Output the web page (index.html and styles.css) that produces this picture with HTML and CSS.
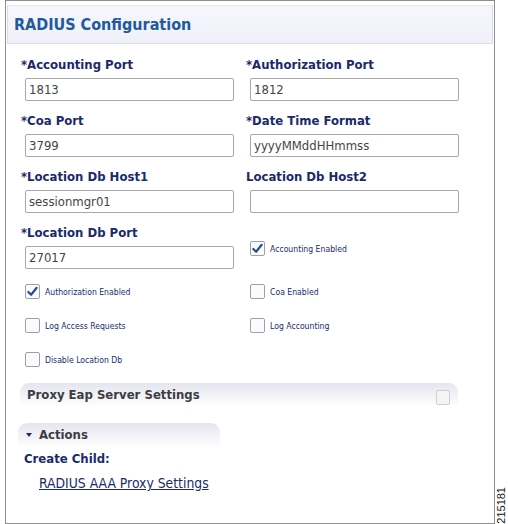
FILE: index.html
```html
<!DOCTYPE html>
<html>
<head>
<meta charset="utf-8">
<link rel="stylesheet" href="styles.css">
</head>
<body>
<div class="page">
  <div class="frame">
    <div class="header"><h1 class="title">RADIUS Configuration</h1></div>
    <div class="fields">
      <div class="field">
        <label class="label">*Accounting Port</label>
        <div class="input">1813</div>
      </div>
      <div class="field">
        <label class="label">*Authorization Port</label>
        <div class="input">1812</div>
      </div>
      <div class="field">
        <label class="label">*Coa Port</label>
        <div class="input">3799</div>
      </div>
      <div class="field">
        <label class="label">*Date Time Format</label>
        <div class="input">yyyyMMddHHmmss</div>
      </div>
      <div class="field">
        <label class="label">*Location Db Host1</label>
        <div class="input">sessionmgr01</div>
      </div>
      <div class="field">
        <label class="label">Location Db Host2</label>
        <div class="input"></div>
      </div>
      <div class="field">
        <label class="label">*Location Db Port</label>
        <div class="input">27017</div>
      </div>
      <div class="field field-check">
        <div class="check">
          <span class="box"><svg viewBox="0 0 14 14" width="13" height="13"><path d="M2.5 7.5 L5.5 10.5 L11.5 3" fill="none" stroke="#1d4f8f" stroke-width="2.3" stroke-linecap="round" stroke-linejoin="round"/></svg></span>
          <span class="check-text">Accounting Enabled</span>
        </div>
      </div>
    </div>
    <div class="checks">
      <div class="check">
        <span class="box"><svg viewBox="0 0 14 14" width="13" height="13"><path d="M2.5 7.5 L5.5 10.5 L11.5 3" fill="none" stroke="#1d4f8f" stroke-width="2.3" stroke-linecap="round" stroke-linejoin="round"/></svg></span>
        <span class="check-text">Authorization Enabled</span>
      </div>
      <div class="check">
        <span class="box"></span>
        <span class="check-text">Coa Enabled</span>
      </div>
      <div class="check">
        <span class="box"></span>
        <span class="check-text">Log Access Requests</span>
      </div>
      <div class="check">
        <span class="box"></span>
        <span class="check-text">Log Accounting</span>
      </div>
      <div class="check">
        <span class="box"></span>
        <span class="check-text">Disable Location Db</span>
      </div>
    </div>
    <div class="proxy-bar">
      <span class="bar-title">Proxy Eap Server Settings</span>
      <span class="box box-light"></span>
    </div>
    <div class="actions-bar">
      <span class="tri"></span>
      <span class="bar-title">Actions</span>
    </div>
    <div class="create">Create Child:</div>
    <a class="link" href="#">RADIUS AAA Proxy Settings</a>
  </div>
  <div class="side"><span class="fig-num">215181</span></div>
</div>
</body>
</html>
```

FILE: styles.css
```css
html, body {
  margin: 0;
  padding: 0;
  background: #ffffff;
}
body {
  font-family: "DejaVu Sans Condensed", "DejaVu Sans", sans-serif;
}
.page {
  display: flex;
  width: 508px;
  height: 524px;
}
.frame {
  margin-left: 5px;
  width: 486px;
  height: 518px;
  border: 1px solid #8e8e8e;
  padding: 4px 1px 0 1px;
  box-sizing: content-box;
  display: flex;
  flex-direction: column;
}
.header {
  height: 37px;
  border: 1px solid #dcdce6;
  border-top: 1px solid #e6e6ee;
  background: linear-gradient(#f6f7fd, #eff0f9);
  display: flex;
  align-items: center;
  padding-left: 6px;
}
.title {
  margin: 0;
  font-size: 16px;
  font-weight: bold;
  color: #1f5a9b;
  line-height: 18px;
}
.fields {
  display: grid;
  grid-template-columns: 225px 225px;
  row-gap: 12px;
  padding: 13px 0 0 14px;
}
.field {
  display: flex;
  flex-direction: column;
}
.label {
  font-size: 13px;
  font-weight: bold;
  color: #1b2a6b;
  line-height: 16px;
  height: 16px;
}
.input {
  margin: 5px 0 0 4px;
  width: 209px;
  height: 23px;
  box-sizing: border-box;
  border: 1px solid #a8a8a8;
  border-radius: 2px;
  font-size: 13px;
  color: #454545;
  line-height: 21px;
  padding-left: 3px;
}
.field-check {
  padding-top: 16px;
}
.field-check .check {
  margin-left: 4px;
}
.checks {
  display: grid;
  grid-template-columns: 225px 225px;
  grid-auto-rows: 15px;
  row-gap: 19px;
  padding: 15px 0 0 18px;
}
.check {
  display: flex;
  align-items: center;
  gap: 5px;
}
.box {
  width: 15px;
  height: 15px;
  box-sizing: border-box;
  border: 1px solid #a0a0a0;
  border-radius: 2px;
  background: #fbfbfd;
  display: flex;
  align-items: center;
  justify-content: center;
  flex: none;
}
.check-text {
  font-size: 8.6px;
  color: #1b2a6b;
  line-height: 12px;
}
.proxy-bar {
  margin: 16px 0 0 13px;
  width: 438px;
  height: 22px;
  box-sizing: border-box;
  border-radius: 9px 9px 0 0;
  background: linear-gradient(#e5e5ef, #f3f3f8 60%, #fdfdfe);
  display: flex;
  align-items: center;
  justify-content: space-between;
  padding: 1px 8px 0 7px;
}
.bar-title {
  font-size: 13px;
  font-weight: bold;
  color: #3c3c44;
  line-height: 16px;
}
.box-light {
  border-color: #cfcfd4;
  background: #f5f5f5;
  width: 14px;
  margin-top: 6px;
}
.actions-bar {
  margin: 18px 0 0 11px;
  width: 202px;
  height: 23px;
  box-sizing: border-box;
  border-radius: 9px 9px 0 0;
  background: linear-gradient(#e5e5ef, #f3f3f8 60%, #fdfdfe);
  display: flex;
  align-items: center;
  padding-left: 8px;
  gap: 7px;
}
.tri {
  width: 0;
  height: 0;
  border-left: 3.5px solid transparent;
  border-right: 3.5px solid transparent;
  border-top: 4px solid #1c2a5a;
}
.create {
  margin: 5px 0 0 17px;
  font-size: 13px;
  font-weight: bold;
  color: #1b2a6b;
  line-height: 16px;
}
.link {
  margin: 8px 0 0 32px;
  font-size: 13.8px;
  color: #1b2a6b;
  line-height: 16px;
  text-decoration: underline;
  align-self: flex-start;
}
.side {
  flex: 1;
  display: flex;
  align-items: flex-end;
  justify-content: flex-end;
}
.fig-num {
  font-family: "Liberation Sans", Arial, sans-serif;
  font-size: 11px;
  color: #111;
  writing-mode: vertical-rl;
  transform: rotate(180deg);
  line-height: 11px;
  margin-right: 1px;
}
```
